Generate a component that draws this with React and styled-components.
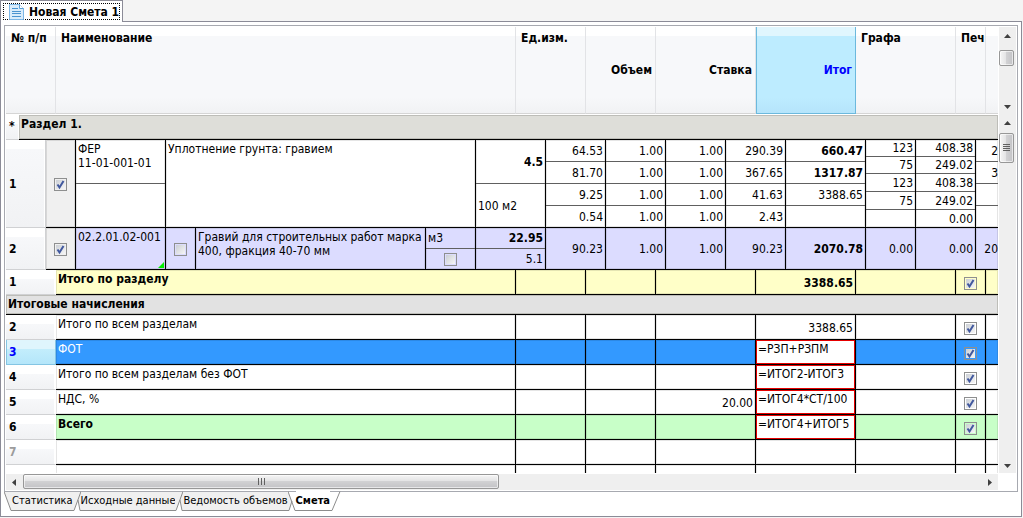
import styled, { createGlobalStyle, css } from 'styled-components';

const GlobalStyle = createGlobalStyle`
  * {
    box-sizing: border-box;
  }

  body {
    margin: 0;
    background: #f4f4f4;
    color: #000;
    font: 12px/14px 'DejaVu Sans Condensed', 'DejaVu Sans', sans-serif;
  }

  button {
    margin: 0;
    padding: 0;
    border: 0;
    background: none;
    color: inherit;
    font: inherit;
  }
`;

const Window = styled.div`
  display: flex;
  flex-direction: column;
  height: 100vh;
  padding: 0 1px 1px 0;
`;

// Document tab above the frame
const DocumentTabs = styled.div`
  display: flex;
  height: 22px;
  margin-bottom: -1px;
`;

const DocumentTab = styled.button`
  display: flex;
  padding: 2px;
  border: 1px solid #8b8b97;
  border-bottom: 0;
  background: #fff;
  font-weight: bold;
  position: relative;
`;

const FocusRing = styled.span`
  display: flex;
  align-items: center;
  gap: 5px;
  height: 17px;
  padding-left: 5px;
  border: 1px dotted #000;
`;

const Frame = styled.div`
  display: flex;
  flex: 1;
  flex-direction: column;
  min-height: 0;
  padding: 3px 3px 0;
  border: 1px solid #8b8b97;
  background: #fff;
`;

const Sheet = styled.div`
  display: flex;
  flex: 1;
  flex-direction: column;
  min-height: 0;
  padding: 1px;
  border: 1px solid #a7a9b0;
`;

const Pane = styled.div`
  display: flex;
  flex: ${({ $grow }) => ($grow ? 1 : 'none')};
  gap: 1px;
  min-height: 0;
`;

const Viewport = styled.div`
  flex: 1;
  min-width: 0;
  padding-top: ${({ $gap }) => ($gap ? 1 : 0)}px;
  overflow: hidden;
`;

const Table = styled.table`
  width: 100%;
  table-layout: fixed;
  border-spacing: 0;

  td:last-child,
  th:last-child {
    border-right: 0;
  }
`;

const HeadCell = styled.th`
  height: 87px;
  padding: 4px 3px 4px 5px;
  border-right: 1px solid #e2e3e6;
  border-bottom: 1px solid #d5d5d5;
  background: linear-gradient(#fff 9px, #f7f8fa 9px, #f7f8fa 70px, #f1f2f4);
  text-align: ${({ $align }) => $align || 'left'};
  vertical-align: ${({ $align }) => ($align ? 'middle' : 'top')};
  white-space: nowrap;

  ${({ $active }) =>
    $active &&
    css`
      border-color: #6cb9dd;
      background: linear-gradient(#e0f6fe 9px, #bdecff 9px, #bdecff 70px, #b5e4fb);
      box-shadow: inset 1px 0 #6cb9dd;
      color: #00f;
    `}
`;

const numberFill = css`
  padding: 0 3px;
  border-bottom: 1px solid #d0d1d3;
  background: linear-gradient(#fff 9px, #f7f8fa 9px, #f1f2f4);
  box-shadow: inset -1px 0 #fff;
  font-weight: bold;
`;

const NumberCell = styled.th`
  ${numberFill}
  border-right: 1px solid ${({ $work }) => ($work ? '#d0d1d3' : '#fff')};
  text-align: left;
  vertical-align: middle;
  color: ${({ $faded }) => ($faded ? '#9c9c9c' : 'inherit')};

  ${({ $active }) =>
    $active &&
    css`
      background: linear-gradient(#dff5fd 9px, #c3edfc 9px, #b4e6fa);
      border-color: #84c5e3;
      box-shadow: inset 1px 0 #84c5e3;
      color: #00f;
    `}
`;

const tones = {
  plain: '#fff',
  gray: '#f0f0f0',
  lilac: '#dcdcff',
  yellow: '#ffffc8',
  blue: '#3399ff',
  green: '#c8ffc8',
};

const Cell = styled.td`
  padding: ${({ $top }) => ($top ? 2 : 1)}px 2px 0;
  border-right: 1px solid #000;
  border-bottom: 1px solid #000;
  background: ${({ $tone }) => tones[$tone || 'plain']};
  box-shadow: inset 0 0 0 1px rgba(0, 0, 0, 0.1);
  color: ${({ $tone }) => ($tone === 'blue' ? '#fff' : 'inherit')};
  font-weight: ${({ $bold }) => ($bold ? 'bold' : 'normal')};
  text-align: ${({ $align }) => $align || 'left'};
  vertical-align: ${({ $top }) => ($top ? 'top' : 'middle')};
  white-space: ${({ $wrap }) => ($wrap ? 'normal' : 'nowrap')};
`;

const FormulaCell = styled(Cell)`
  box-shadow: inset 0 0 0 1px #e60000;
`;

const StackCell = styled(Cell)`
  padding: 0;
`;

// Last visible column, its numbers stand right at the edge
const EdgeCell = styled(Cell)`
  padding-right: 0;
`;

// Cell content split by thin lines into several parts
const Stack = styled.div`
  display: grid;
  grid-template-rows: ${({ $rows }) => $rows};
`;

const Part = styled.div`
  display: flex;
  align-items: ${({ $top }) => ($top ? 'flex-start' : 'center')};
  justify-content: ${({ $align }) => $align || 'flex-end'};
  padding: ${({ $top }) => ($top ? 2 : 1)}px ${({ $edge }) => ($edge ? 0 : 2)}px
    1px 2px;
  border-bottom: 1px solid #606060;
  font-weight: ${({ $bold }) => ($bold ? 'bold' : 'normal')};

  &:last-child {
    border-bottom: 0;
  }
`;

const WorkTable = styled(Table)`
  tr.work {
    height: 88px;
  }

  tr.material {
    height: 42px;
  }
`;

const SummaryTable = styled(Table)`
  tr {
    height: 25px;
  }
`;

const SectionRow = styled.div`
  display: flex;
  height: ${({ $low }) => ($low ? 20 : 25)}px;
`;

const SectionMark = styled.div`
  ${numberFill}
  width: 13px;
  padding-top: 4px;
`;

const SectionTitle = styled.div`
  flex: 1;
  padding: 2px 2px 0;
  border-bottom: 1px solid #000;
  background: ${({ $low }) => ($low ? '#e2e2e2' : '#deded9')};
  box-shadow: inset 0 0 0 1px #bdbdb8;
  font-weight: bold;
`;

const CornerFlag = styled.span`
  position: absolute;
  right: 1px;
  bottom: 1px;
  border: 3px solid transparent;
  border-right-color: #00f000;
  border-bottom-color: #00f000;
`;

const FlagCell = styled(Cell)`
  position: relative;
`;

const CheckLabel = styled.label`
  display: inline-grid;
  width: 13px;
  height: 13px;
  vertical-align: middle;

  input,
  svg {
    grid-area: 1 / 1;
  }

  input {
    appearance: none;
    width: 13px;
    height: 13px;
    margin: 0;
    border: 1px solid #8e8f8f;
    background: linear-gradient(135deg, #cbcfd5, #f6f6f6) content-box #f4f4f4;
    padding: 1px;
  }
`;

const Scrollbar = styled.div`
  display: flex;
  flex: none;
  flex-direction: ${({ $horizontal }) => ($horizontal ? 'row' : 'column')};
  ${({ $horizontal }) =>
    $horizontal ? 'height: 16px; margin: 1px 18px 0 0;' : 'width: 17px;'}
  background: #efefef;
`;

const ScrollArrow = styled.button`
  display: flex;
  flex: none;
  align-items: center;
  justify-content: center;
  width: 17px;
  height: ${({ $tall }) => ($tall ? 19 : 16)}px;
`;

const Thumb = styled.button`
  display: flex;
  flex: none;
  align-items: center;
  justify-content: center;
  border: 1px solid #979797;
  border-radius: 2px;
  box-shadow: inset 0 0 0 1px rgba(255, 255, 255, 0.6);
  background: linear-gradient(
    ${({ $horizontal }) => ($horizontal ? '180deg' : '90deg')},
    #f5f5f5,
    #e4e4e5 45%,
    #d1d1d3 50%,
    #c3c3c6
  );
  ${({ $horizontal, $size }) =>
    $horizontal
      ? `width: ${$size}; height: 15px;`
      : `width: 15px; height: ${$size};`}
  margin-top: ${({ $scrolled }) => ($scrolled ? 4 : 0)}px;
`;

const Spacer = styled.span`
  flex: 1;
`;

// Sheet tabs under the table
const SheetTabs = styled.div`
  display: flex;
  flex: none;
  height: 25px;
  margin-top: -1px;
  align-items: flex-start;
`;

const SheetTab = styled.button`
  height: 20px;
  border-top: 1px solid ${({ $active }) => ($active ? '#fff' : '#a7a9b0')};
  border-bottom: 1px solid #8c8c8c;
  background: ${({ $active }) => ($active ? '#fff' : '#f0f0f0')};
  font-size: 11px;
  font-weight: ${({ $active }) => ($active ? 'bold' : 'normal')};
`;

const SheetIcon = () => (
  <svg width="15" height="16" viewBox="0 0 15 16" aria-hidden="true">
    <path d="M.5.5h10l4 4v11H.5z" fill="#d9ecfb" stroke="#7db7e6" />
    <path d="M10.500 .5v4h4" fill="#fff" stroke="#5a9fd6" />
    <path d="M3 4.500h6M3 7.500h9M3 9.500h9M3 12.500h9" stroke="#4a94d0" />
  </svg>
);

const arrowPaths = {
  up: 'M1 6L4.500 2L8 6z',
  down: 'M1 3L4.500 7L8 3z',
  left: 'M6 1L2 4.500L6 8z',
  right: 'M3 1L7 4.500L3 8z',
};

const Arrow = ({ to, tall }) => (
  <ScrollArrow $tall={tall} aria-label={`Scroll ${to}`}>
    <svg width="9" height="9" viewBox="0 0 9 9">
      <path d={arrowPaths[to]} fill="#404040" />
    </svg>
  </ScrollArrow>
);

const Grip = ({ horizontal }) => (
  <svg width="9" height="9" viewBox="0 0 9 9" aria-hidden="true">
    <path
      d={
        horizontal
          ? 'M1.500 1v7M4.500 1v7M7.500 1v7'
          : 'M1 .5h7M1 2.500h7M1 4.500h7M1 6.500h7'
      }
      stroke="#606060"
    />
  </svg>
);

// Slanted edges of the sheet tabs
const edges = {
  first: { width: 8, line: 'M0 .5L7 19.500H8', fill: 'M0 .5H8V19.500H7z' },
  middle: {
    width: 8,
    line: 'M8 .5L1 19.500H0M5 9L7 19.500H8',
    fill: 'M0 .5H8V19.500H7L5 9L1 19.500H0z',
  },
  before: {
    width: 8,
    line: 'M0 .5L7 19.500H8M4 10L1 19.500H0',
    fill: 'M0 .5L4 10L1 19.500H0z',
  },
  last: { width: 11, line: 'M10 .5L2 19.500H0', fill: '' },
};

const TabEdge = ({ kind }) => {
  const { width, line, fill } = edges[kind];

  return (
    <svg
      width={width}
      height="20"
      viewBox={`0 0 ${width} 20`}
      aria-hidden="true"
    >
      <path d={fill} fill="#f0f0f0" />
      {kind !== 'last' && <path d="M0 .5H8" stroke="#a7a9b0" />}
      <path d={line} fill="none" stroke="#8c8c8c" />
    </svg>
  );
};

const Check = ({ label, on = false }) => (
  <CheckLabel>
    <input type="checkbox" defaultChecked={on} aria-label={label} />
    {on && (
      <svg width="13" height="13" viewBox="0 0 13 13" pointerEvents="none">
        <path
          d="M3.500 6.500L5.500 9.500L9.500 3"
          fill="none"
          stroke="#41589e"
          strokeWidth="2"
        />
      </svg>
    )}
  </CheckLabel>
);

const Columns = ({ widths }) => (
  <colgroup>
    {widths.map((width, i) => (
      <col key={i} style={{ width }} />
    ))}
    <col />
  </colgroup>
);

const summaryWidths = [50, 460, 70, 70, 100, 100, 100, 30];
const workWidths = [40, 30, 90, 30, 230, 50, 70, 60, 60, 60, 60, 80, 50, 60];

const quarters = '22px 22px 22px 21px';
const fifths = '17px 17px 18px 18px 17px';
const halves = '44px 43px';

const workValues = [
  { rows: quarters, values: ['64.53', '81.70', '9.25', '0.54'] },
  { rows: quarters, values: ['1.00', '1.00', '1.00', '1.00'] },
  { rows: quarters, values: ['1.00', '1.00', '1.00', '1.00'] },
  { rows: quarters, values: ['290.39', '367.65', '41.63', '2.43'] },
  { rows: quarters, values: ['660.47', '1317.87', '3388.65', ''], bold: 2 },
  { rows: fifths, values: ['123', '75', '123', '75', ''] },
  { rows: fifths, values: ['408.38', '249.02', '408.38', '249.02', '0.00'] },
];

const materialValues = ['90.23', '1.00', '1.00', '90.23'];

const summaryRows = [
  { no: 2, name: 'Итого по всем разделам', total: '3388.65' },
  { no: 3, name: 'ФОТ', formula: '=РЗП+РЗПМ', tone: 'blue', active: true },
  { no: 4, name: 'Итого по всем разделам без ФОТ', formula: '=ИТОГ2-ИТОГ3' },
  { no: 5, name: 'НДС, %', rate: '20.00', formula: '=ИТОГ4*СТ/100' },
  {
    no: 6,
    name: 'Всего',
    formula: '=ИТОГ4+ИТОГ5',
    tone: 'green',
    bold: true,
  },
  { no: 7, empty: true },
  { no: '', empty: true },
];

function SummaryRow({ row }) {
  const { no, name, rate, total, formula, tone, bold, active, empty } = row;

  return (
    <tr>
      <NumberCell $active={active} $faded={empty}>
        {no}
      </NumberCell>
      <Cell $tone={tone} $bold={bold} $top>
        {name}
      </Cell>
      <Cell $tone={tone} />
      <Cell $tone={tone} />
      <Cell $tone={tone} $align="right">
        {rate}
      </Cell>
      {formula ? (
        <FormulaCell $top>{formula}</FormulaCell>
      ) : (
        <Cell $tone={tone} $bold={bold} $align="right">
          {total}
        </Cell>
      )}
      <Cell $tone={tone} />
      <Cell $tone={tone} $align="center">
        {!empty && <Check label={`Печать: ${name}`} on />}
      </Cell>
      <Cell $tone={tone} />
    </tr>
  );
}

function Works() {
  return (
    <WorkTable>
      <Columns widths={workWidths} />
      <tbody>
        <tr className="work">
          <NumberCell $work>1</NumberCell>
          <Cell $tone="gray" $align="center">
            <Check label="Позиция 1" on />
          </Cell>
          <StackCell>
            <Stack $rows={halves}>
              <Part $top $align="flex-start">
                ФЕР
                <br />
                11-01-001-01
              </Part>
              <Part />
            </Stack>
          </StackCell>
          <Cell colSpan={3} $top>
            Уплотнение грунта: гравием
          </Cell>
          <StackCell>
            <Stack $rows={halves}>
              <Part $bold>4.5</Part>
              <Part $align="flex-start">100 м2</Part>
            </Stack>
          </StackCell>
          {workValues.map(({ rows, values, bold = 0 }, i) => (
            <StackCell key={i}>
              <Stack $rows={rows}>
                {values.map((value, j) => (
                  <Part key={j} $bold={j < bold}>
                    {value}
                  </Part>
                ))}
              </Stack>
            </StackCell>
          ))}
          <StackCell>
            <Stack $rows={quarters}>
              <Part $edge>2</Part>
              <Part $edge>3</Part>
              <Part />
              <Part />
            </Stack>
          </StackCell>
        </tr>
        <tr className="material">
          <NumberCell $work>2</NumberCell>
          <Cell $tone="gray" $align="center">
            <Check label="Позиция 2" on />
          </Cell>
          <FlagCell $tone="lilac" $top>
            02.2.01.02-001
            <CornerFlag />
          </FlagCell>
          <Cell $tone="lilac" $align="center">
            <Check label="Отметка" />
          </Cell>
          <Cell $tone="lilac" $top $wrap>
            Гравий для строительных работ марка 400, фракция 40-70 мм
          </Cell>
          <StackCell $tone="lilac">
            <Stack $rows="21px 20px">
              <Part $align="flex-start">м3</Part>
              <Part $align="center">
                <Check label="м3" />
              </Part>
            </Stack>
          </StackCell>
          <StackCell $tone="lilac">
            <Stack $rows="21px 20px">
              <Part $bold>22.95</Part>
              <Part>5.1</Part>
            </Stack>
          </StackCell>
          {materialValues.map((value, i) => (
            <Cell key={i} $tone="lilac" $align="right">
              {value}
            </Cell>
          ))}
          <Cell $tone="lilac" $align="right" $bold>
            2070.78
          </Cell>
          <Cell $tone="lilac" $align="right">
            0.00
          </Cell>
          <Cell $tone="lilac" $align="right">
            0.00
          </Cell>
          <EdgeCell $tone="lilac" $align="right">
            20
          </EdgeCell>
        </tr>
      </tbody>
    </WorkTable>
  );
}

function App() {
  return (
    <>
      <GlobalStyle />
      <Window>
        <DocumentTabs>
          <DocumentTab>
            <FocusRing>
              <SheetIcon />
              Новая Смета 1
            </FocusRing>
          </DocumentTab>
        </DocumentTabs>
        <Frame>
          <Sheet>
            <Pane>
              <Viewport>
                <Table>
                  <Columns widths={summaryWidths} />
                  <thead>
                    <tr>
                      <HeadCell>№ п/п</HeadCell>
                      <HeadCell>Наименование</HeadCell>
                      <HeadCell>Ед.изм.</HeadCell>
                      <HeadCell $align="right">Объем</HeadCell>
                      <HeadCell $align="right">Ставка</HeadCell>
                      <HeadCell $align="right" $active>
                        Итог
                      </HeadCell>
                      <HeadCell>Графа</HeadCell>
                      <HeadCell>Печ</HeadCell>
                      <HeadCell />
                    </tr>
                  </thead>
                </Table>
              </Viewport>
              <Scrollbar>
                <Arrow to="up" tall />
                <Thumb $size="16px" $scrolled aria-label="Scroll header" />
                <Spacer />
                <Arrow to="down" />
              </Scrollbar>
            </Pane>
            <Pane $grow>
              <Viewport $gap>
                <SectionRow>
                  <SectionMark>*</SectionMark>
                  <SectionTitle>Раздел 1.</SectionTitle>
                </SectionRow>
                <Works />
                <SummaryTable>
                  <Columns widths={summaryWidths} />
                  <tbody>
                    <SummaryRow
                      row={{
                        no: 1,
                        name: 'Итого по разделу',
                        total: '3388.65',
                        tone: 'yellow',
                        bold: true,
                      }}
                    />
                  </tbody>
                </SummaryTable>
                <SectionRow $low>
                  <SectionTitle $low>Итоговые начисления</SectionTitle>
                </SectionRow>
                <SummaryTable>
                  <Columns widths={summaryWidths} />
                  <tbody>
                    {summaryRows.map((row) => (
                      <SummaryRow key={row.no} row={row} />
                    ))}
                  </tbody>
                </SummaryTable>
              </Viewport>
              <Scrollbar>
                <Arrow to="up" tall />
                <Thumb $size="30px" aria-label="Scroll rows">
                  <Grip />
                </Thumb>
                <Spacer />
                <Arrow to="down" />
              </Scrollbar>
            </Pane>
            <Scrollbar $horizontal>
              <Arrow to="left" />
              <Thumb $horizontal $size="48%" aria-label="Scroll columns">
                <Grip horizontal />
              </Thumb>
              <Spacer />
              <Arrow to="right" />
            </Scrollbar>
          </Sheet>
          <SheetTabs>
            <TabEdge kind="first" />
            <SheetTab>Статистика</SheetTab>
            <TabEdge kind="middle" />
            <SheetTab>Исходные данные</SheetTab>
            <TabEdge kind="middle" />
            <SheetTab>Ведомость объемов</SheetTab>
            <TabEdge kind="before" />
            <SheetTab $active>Смета</SheetTab>
            <TabEdge kind="last" />
          </SheetTabs>
        </Frame>
      </Window>
    </>
  );
}

export default App;
